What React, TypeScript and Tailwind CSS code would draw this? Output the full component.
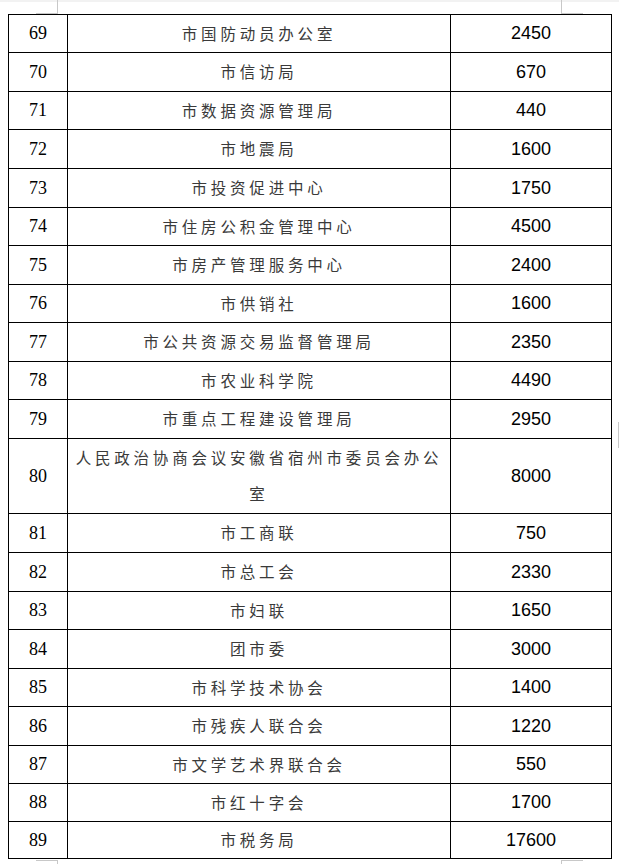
const rows: { no: string; name: string; amount: string; h: number }[] = [
  { no: "69", name: "市国防动员办公室", amount: "2450", h: 38 },
  { no: "70", name: "市信访局", amount: "670", h: 39 },
  { no: "71", name: "市数据资源管理局", amount: "440", h: 38 },
  { no: "72", name: "市地震局", amount: "1600", h: 39 },
  { no: "73", name: "市投资促进中心", amount: "1750", h: 39 },
  { no: "74", name: "市住房公积金管理中心", amount: "4500", h: 38 },
  { no: "75", name: "市房产管理服务中心", amount: "2400", h: 39 },
  { no: "76", name: "市供销社", amount: "1600", h: 38 },
  { no: "77", name: "市公共资源交易监督管理局", amount: "2350", h: 39 },
  { no: "78", name: "市农业科学院", amount: "4490", h: 38 },
  { no: "79", name: "市重点工程建设管理局", amount: "2950", h: 39 },
  { no: "80", name: "人民政治协商会议安徽省宿州市委员会办公室", amount: "8000", h: 75 },
  { no: "81", name: "市工商联", amount: "750", h: 39 },
  { no: "82", name: "市总工会", amount: "2330", h: 39 },
  { no: "83", name: "市妇联", amount: "1650", h: 38 },
  { no: "84", name: "团市委", amount: "3000", h: 39 },
  { no: "85", name: "市科学技术协会", amount: "1400", h: 38 },
  { no: "86", name: "市残疾人联合会", amount: "1220", h: 39 },
  { no: "87", name: "市文学艺术界联合会", amount: "550", h: 38 },
  { no: "88", name: "市红十字会", amount: "1700", h: 38 },
  { no: "89", name: "市税务局", amount: "17600", h: 37 },
];

// page corner marks drawn by the document viewer
function PageMarks() {
  return (
    <svg className="absolute inset-0 pointer-events-none" width="619" height="864" viewBox="0 0 619 864">
      <rect x="0" y="0" width="619" height="2" fill="#f2f2f2" />
      <g stroke="#c8c8c8" strokeWidth="1" fill="none" shapeRendering="crispEdges">
        <path d="M57.5 0V13.5H36" />
        <path d="M561.5 0V13.5H583" />
        <path d="M36 860.5H57.5V864" />
        <path d="M583 860.5H561.5V864" />
        <path d="M618.5 422V448" />
      </g>
    </svg>
  );
}

export default function App() {
  return (
    <div className="relative w-[619px] h-[864px] bg-white overflow-hidden">
      <PageMarks />
      <div className="pl-[8px] pt-[14px]">
        <div className="w-[604px] border-l border-t border-black">
          {rows.map((r) => (
            <div key={r.no} className="flex" style={{ height: r.h }}>
              <div className="w-[59px] flex items-center justify-center border-r border-b border-black font-['Liberation_Serif',serif] text-[18px] text-black">
                {r.no}
              </div>
              <div className="w-[383px] flex items-center justify-center border-r border-b border-black px-[7px] pb-[2px] text-center font-['Noto_Sans_CJK_SC',sans-serif] text-[15.5px] leading-[36px] tracking-[3.8px] text-[#3a3a3a]">
                <span>{r.name}</span>
              </div>
              <div className="w-[161px] flex items-center justify-center border-r border-b border-black font-['Liberation_Sans',sans-serif] text-[18px] text-black">
                {r.amount}
              </div>
            </div>
          ))}
        </div>
      </div>
    </div>
  );
}
